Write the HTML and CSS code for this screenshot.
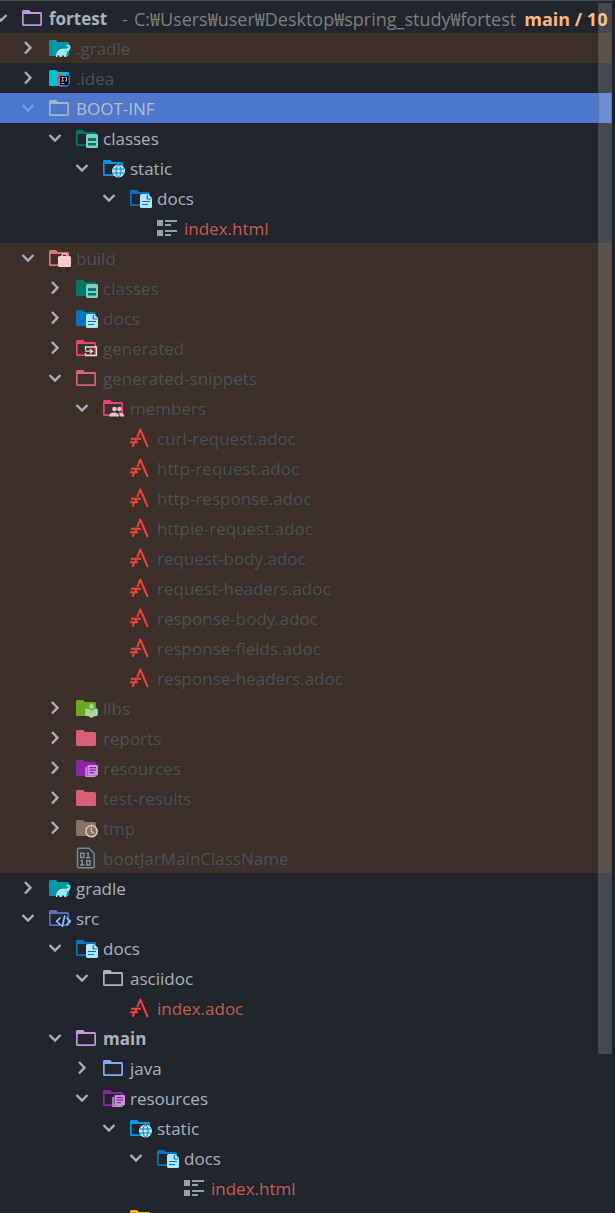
FILE: index.html
```
<!DOCTYPE html>
<html lang="en">
<head>
  <meta charset="UTF-8" />
  <meta name="viewport" content="width=device-width, initial-scale=1.0" />
  <title>fortest - Project</title>
  <link rel="stylesheet" href="styles.css">
</head>
<body>

  <svg class="sprite" aria-hidden="true">
    <symbol id="down" viewBox="0 0 16 16"><path d="M2.5 5 8 10.500 13.500 5" fill="none" stroke="currentColor" stroke-width="2.400"/></symbol>
    <symbol id="right" viewBox="0 0 16 16"><path d="M5 2 10.500 7.700 5 13.500" fill="none" stroke="currentColor" stroke-width="2.400"/></symbol>

    <symbol id="folder" viewBox="0 0 24 20"><path d="M2.500 2H8l2 2h9.500Q21 4 21 5.500v11Q21 18 19.500 18h-17Q1 18 1 16.500v-13Q1 2 2.500 2z" fill="currentColor"/></symbol>
    <symbol id="open" viewBox="0 0 24 20"><path fill-rule="evenodd" d="M2.500 2H8l2 2h9.500Q21 4 21 5.500v11Q21 18 19.500 18h-17Q1 18 1 16.500v-13Q1 2 2.500 2zM2.700 6v10.300h16.600V6z" fill="currentColor"/></symbol>

    <symbol id="b-gradle" viewBox="0 0 24 20"><path d="M8 19c0-4 1.500-7 5-8 2-.6 4 .2 5.500-.3 1.500-.5 2.500-1.500 2.200-2.300-.3-.8-1.500-.4-1.700.3l-.9-.6c.6-1.600 3.400-1.800 4.200 0 .9 2.400-.7 4.500-2.800 5.700-.8.500-1 2.200-1 5.200h-2.300c-.1-1.500-.5-2-1.200-2s-1.100.6-1.200 2h-2.200c-.1-1.500-.4-2-1.100-2s-1.100.6-1.200 2z" fill="#a8e8ee"/><circle cx="17.500" cy="13" r=".6" fill="#0097a7"/></symbol>
    <symbol id="b-idea" viewBox="0 0 24 20"><path d="M10 7.500 14 6l4 4-4 8-4-2z" fill="#fc315c"/><path d="M17 7l4-1 1 3v7l-4 3-5-1z" fill="#1878f2"/><path d="M10.500 15l4 1v3l-4-1z" fill="#b14fd0"/><path d="M12 8h8.500v9H12z" fill="#000"/><path d="M13.500 9.500h2.500M14.700 9.500v3.500M13.500 13h2.500M17 9.500h1.500v3.500h-1.500M13.500 15.500h3" stroke="#ccc" stroke-width=".9" fill="none"/></symbol>
    <symbol id="b-classes" viewBox="0 0 24 20"><rect x="11" y="6" width="12" height="14" rx="1.500" fill="#80cbc4"/><path d="M13 10h8v3h-8zM13 15h8v2.500h-8z" fill="#00796b"/></symbol>
    <symbol id="b-globe" viewBox="0 0 24 20"><circle cx="16.500" cy="13" r="6.500" fill="#b3e5fc"/><g fill="none" stroke="#0277bd" stroke-width=".9"><ellipse cx="16.500" cy="13" rx="2.500" ry="5.800"/><path d="M11 11h11M11 15h11"/></g></symbol>
    <symbol id="b-docs" viewBox="0 0 24 20"><path d="M12.500 6H19l4 4v8.500q0 1.500-1.500 1.500h-9Q11 20 11 18.500v-11Q11 6 12.500 6z" fill="#b3e5fc"/><path d="M18.300 7v4h4M13 13.500h8M13 16.500h6" stroke="#0277bd" stroke-width="1.200" fill="none"/></symbol>
    <symbol id="b-build" viewBox="0 0 24 20"><path d="M14 9V7.500q0-1.300 1.300-1.300h2.400q1.300 0 1.300 1.300V9" fill="none" stroke="#ffcdd2" stroke-width="1.300"/><rect x="10" y="8" width="13" height="11" rx="1.500" fill="#ffcdd2"/></symbol>
    <symbol id="b-generated" viewBox="0 0 24 20"><path d="M10.500 12V9h11v8.500h-11V15M10 13.200h7M15 11l2.500 2.200L15 15.500" fill="none" stroke="#f8d4dc" stroke-width="1.300"/></symbol>
    <symbol id="b-members" viewBox="0 0 24 20"><g fill="#f8bbd0"><circle cx="12.500" cy="11" r="2.300"/><circle cx="17.500" cy="11" r="2.300"/><path d="M7 18.500c0-2.500 2-4 5-4s5 1.500 5 4zM16.300 14.500c4-.4 6 1.500 6 4h-4c0-1.500-.6-3-2-4z"/></g></symbol>
    <symbol id="b-libs" viewBox="0 0 24 20"><circle cx="16.500" cy="8.500" r="2.400" fill="#a5d6a7"/><path d="M11 10.500q3.500.5 5.500 2.300 2-1.800 5.500-2.300.8 0 .8.800v6.200q-4 .3-6.300 2.500-2.300-2.200-6.300-2.500v-6.200q0-.8.800-.8z" fill="#a5d6a7"/></symbol>
    <symbol id="b-resources" viewBox="0 0 24 20"><rect x="12.500" y="7" width="10.500" height="10.500" rx="1.200" fill="#ce93d8"/><path d="M11 9v9.300h9.500" fill="none" stroke="#ce93d8" stroke-width="1.500"/><path d="M14.500 9.700h6.500M14.500 12.200h6.500M14.500 14.700h4.500" stroke="#8e24aa" stroke-width="1.200"/></symbol>
    <symbol id="b-tmp" viewBox="0 0 24 20"><circle cx="16.500" cy="13.200" r="5.600" fill="#8d6e63" stroke="#d7ccc8" stroke-width="1.500"/><path d="M16.300 9.500v4l2.700 2" fill="none" stroke="#d7ccc8" stroke-width="1.200"/></symbol>
    <symbol id="b-src" viewBox="0 0 24 20"><path d="M12.500 9.500 8.700 13.200 12.500 17M18.500 9.500 22.300 13.200 18.500 17M16.800 7.500l-2.600 11.500" fill="none" stroke="#81d4fa" stroke-width="1.600"/></symbol>

    <symbol id="adoc" viewBox="0 0 24 20"><path d="M8.300 9 11.300 1.500 18.700 19M2 10.800h10M1 14.200h8M7.500 10.500 6.500 14M5.200 14.200 3.700 18.800" fill="none" stroke="#f44336" stroke-width="2" stroke-linejoin="round"/></symbol>
    <symbol id="html" viewBox="0 0 24 20"><path d="M1 2h6v6H1zM1 12h6v6H1zM9 2h12v2H9zM9 6h6v2H9zM9 12h12v2H9zM9 16h6v2H9z" fill="#90a4ae"/></symbol>
    <symbol id="binary" viewBox="0 0 24 22"><path d="M3.500 1.200H14l5.200 5.300v13.300q0 1-1 1H3.500q-1 0-1-1V2.200q0-1 1-1z" fill="none" stroke="#6c8d9c" stroke-width="1.500"/><path d="M5.700 6.200h3.200v4.300H5.700zM11.500 6.200h1.700v4.800M11 10.800h4.500M5.500 13.500h1.700v4.600M5 18h4.500M11.800 13.700h3.200v4.300h-3.200z" fill="none" stroke="#7895a1" stroke-width="1.400"/></symbol>
  </svg>

  <main class="project">
    <ul class="tree">
      <li class="row level-0 root"><button class="toggle" aria-label="Collapse"><svg><use href="#down"/></svg></button><svg class="icon violet"><use href="#open"/></svg><span>fortest</span><span class="dash">-</span><span class="path">C:₩Users₩user₩Desktop₩spring_study₩fortest</span><span class="branch">main / 10</span></li>
      <li class="row level-1 excluded"><button class="toggle" aria-label="Expand"><svg><use href="#right"/></svg></button><svg class="icon cyan"><use href="#folder"/><use href="#b-gradle"/></svg><span>.gradle</span></li>
      <li class="row level-1 ignored"><button class="toggle" aria-label="Expand"><svg><use href="#right"/></svg></button><svg class="icon aqua"><use href="#folder"/><use href="#b-idea"/></svg><span>.idea</span></li>
      <li class="row level-1 selected"><button class="toggle" aria-label="Collapse"><svg><use href="#down"/></svg></button><svg class="icon grey"><use href="#open"/></svg><span>BOOT-INF</span></li>
      <li class="row level-2"><button class="toggle" aria-label="Collapse"><svg><use href="#down"/></svg></button><svg class="icon teal"><use href="#open"/><use href="#b-classes"/></svg><span>classes</span></li>
      <li class="row level-3"><button class="toggle" aria-label="Collapse"><svg><use href="#down"/></svg></button><svg class="icon sky"><use href="#open"/><use href="#b-globe"/></svg><span>static</span></li>
      <li class="row level-4"><button class="toggle" aria-label="Collapse"><svg><use href="#down"/></svg></button><svg class="icon blue"><use href="#open"/><use href="#b-docs"/></svg><span>docs</span></li>
      <li class="row level-5 file unversioned"><svg class="icon"><use href="#html"/></svg><span>index.html</span></li>

      <li class="row level-1 excluded"><button class="toggle" aria-label="Collapse"><svg><use href="#down"/></svg></button><svg class="icon coral"><use href="#open"/><use href="#b-build"/></svg><span>build</span></li>
      <li class="row level-2 excluded"><button class="toggle" aria-label="Expand"><svg><use href="#right"/></svg></button><svg class="icon teal"><use href="#folder"/><use href="#b-classes"/></svg><span>classes</span></li>
      <li class="row level-2 excluded"><button class="toggle" aria-label="Expand"><svg><use href="#right"/></svg></button><svg class="icon blue"><use href="#folder"/><use href="#b-docs"/></svg><span>docs</span></li>
      <li class="row level-2 excluded"><button class="toggle" aria-label="Expand"><svg><use href="#right"/></svg></button><svg class="icon pink"><use href="#open"/><use href="#b-generated"/></svg><span>generated</span></li>
      <li class="row level-2 excluded"><button class="toggle" aria-label="Collapse"><svg><use href="#down"/></svg></button><svg class="icon rose"><use href="#open"/></svg><span>generated-snippets</span></li>
      <li class="row level-3 excluded"><button class="toggle" aria-label="Collapse"><svg><use href="#down"/></svg></button><svg class="icon pink"><use href="#open"/><use href="#b-members"/></svg><span>members</span></li>
      <li class="row level-4 file excluded"><svg class="icon"><use href="#adoc"/></svg><span>curl-request.adoc</span></li>
      <li class="row level-4 file excluded"><svg class="icon"><use href="#adoc"/></svg><span>http-request.adoc</span></li>
      <li class="row level-4 file excluded"><svg class="icon"><use href="#adoc"/></svg><span>http-response.adoc</span></li>
      <li class="row level-4 file excluded"><svg class="icon"><use href="#adoc"/></svg><span>httpie-request.adoc</span></li>
      <li class="row level-4 file excluded"><svg class="icon"><use href="#adoc"/></svg><span>request-body.adoc</span></li>
      <li class="row level-4 file excluded"><svg class="icon"><use href="#adoc"/></svg><span>request-headers.adoc</span></li>
      <li class="row level-4 file excluded"><svg class="icon"><use href="#adoc"/></svg><span>response-body.adoc</span></li>
      <li class="row level-4 file excluded"><svg class="icon"><use href="#adoc"/></svg><span>response-fields.adoc</span></li>
      <li class="row level-4 file excluded"><svg class="icon"><use href="#adoc"/></svg><span>response-headers.adoc</span></li>
      <li class="row level-2 excluded"><button class="toggle" aria-label="Expand"><svg><use href="#right"/></svg></button><svg class="icon green"><use href="#folder"/><use href="#b-libs"/></svg><span>libs</span></li>
      <li class="row level-2 excluded"><button class="toggle" aria-label="Expand"><svg><use href="#right"/></svg></button><svg class="icon rose"><use href="#folder"/></svg><span>reports</span></li>
      <li class="row level-2 excluded"><button class="toggle" aria-label="Expand"><svg><use href="#right"/></svg></button><svg class="icon purple"><use href="#folder"/><use href="#b-resources"/></svg><span>resources</span></li>
      <li class="row level-2 excluded"><button class="toggle" aria-label="Expand"><svg><use href="#right"/></svg></button><svg class="icon rose"><use href="#folder"/></svg><span>test-results</span></li>
      <li class="row level-2 excluded"><button class="toggle" aria-label="Expand"><svg><use href="#right"/></svg></button><svg class="icon brown"><use href="#folder"/><use href="#b-tmp"/></svg><span>tmp</span></li>
      <li class="row level-2 file excluded"><svg class="icon tall"><use href="#binary"/></svg><span>bootJarMainClassName</span></li>

      <li class="row level-1"><button class="toggle" aria-label="Expand"><svg><use href="#right"/></svg></button><svg class="icon cyan"><use href="#folder"/><use href="#b-gradle"/></svg><span>gradle</span></li>
      <li class="row level-1"><button class="toggle" aria-label="Collapse"><svg><use href="#down"/></svg></button><svg class="icon indigo"><use href="#open"/><use href="#b-src"/></svg><span>src</span></li>
      <li class="row level-2"><button class="toggle" aria-label="Collapse"><svg><use href="#down"/></svg></button><svg class="icon blue"><use href="#open"/><use href="#b-docs"/></svg><span>docs</span></li>
      <li class="row level-3"><button class="toggle" aria-label="Collapse"><svg><use href="#down"/></svg></button><svg class="icon grey"><use href="#open"/></svg><span>asciidoc</span></li>
      <li class="row level-4 file unversioned"><svg class="icon"><use href="#adoc"/></svg><span>index.adoc</span></li>
      <li class="row level-2 module"><button class="toggle" aria-label="Collapse"><svg><use href="#down"/></svg></button><svg class="icon violet"><use href="#open"/></svg><span>main</span></li>
      <li class="row level-3"><button class="toggle" aria-label="Expand"><svg><use href="#right"/></svg></button><svg class="icon source"><use href="#open"/></svg><span>java</span></li>
      <li class="row level-3"><button class="toggle" aria-label="Collapse"><svg><use href="#down"/></svg></button><svg class="icon purple"><use href="#open"/><use href="#b-resources"/></svg><span>resources</span></li>
      <li class="row level-4"><button class="toggle" aria-label="Collapse"><svg><use href="#down"/></svg></button><svg class="icon sky"><use href="#open"/><use href="#b-globe"/></svg><span>static</span></li>
      <li class="row level-5"><button class="toggle" aria-label="Collapse"><svg><use href="#down"/></svg></button><svg class="icon blue"><use href="#open"/><use href="#b-docs"/></svg><span>docs</span></li>
      <li class="row level-6 file unversioned"><svg class="icon"><use href="#html"/></svg><span>index.html</span></li>
      <li class="row level-4 file"><svg class="icon amber"><use href="#folder"/></svg><span>templates</span></li>
    </ul>
    <div class="scrollbar"></div>
  </main>

</body>
</html>
```
FILE: styles.css
```
* {
  box-sizing: border-box;
}

body {
  margin: 0;
  height: 100vh;
  overflow: hidden;
  background: #22252d;
  color: #a9b1be;
  font-family: "Open Sans", "Noto Sans CJK KR", sans-serif;
  font-size: 17px;
}

.sprite {
  display: none;
}

.project {
  position: relative;
  height: 100vh;
  overflow: hidden;
  padding-top: 2px;
  border-top: 1px solid #454b5b;
  border-right: 3px solid #1d2129;
}

.tree {
  list-style: none;
  margin: 0 0 0 -7px;
  padding: 0;
}

.row {
  display: flex;
  align-items: center;
  height: 30px;
  line-height: 30px;
  white-space: nowrap;
}

.row span {
  padding-top: 2px;
}

.level-1 { padding-left: 27px; }
.level-2 { padding-left: 54px; }
.level-3 { padding-left: 81px; }
.level-4 { padding-left: 108px; }
.level-5 { padding-left: 135px; }
.level-6 { padding-left: 162px; }

.toggle {
  display: flex;
  width: 16px;
  height: 16px;
  margin-right: 12px;
  padding: 0;
  border: none;
  background: none;
  color: #a9adbd;
  cursor: pointer;
}

.toggle svg {
  width: 16px;
  height: 16px;
}

.icon {
  flex: none;
  width: 24px;
  height: 20px;
  margin-right: 4px;
}

.icon.tall {
  height: 22px;
}

/* files have no toggle */
.file .icon {
  margin-left: 28px;
}

.root,
.module {
  font-weight: bold;
}

.dash,
.path {
  color: #7d7f80;
  font-size: 18px;
  font-weight: normal;
}

.dash {
  margin-left: 15px;
}

.path {
  margin-left: 6px;
}

.branch {
  margin-left: 8px;
  color: #ffb680;
  font-size: 18px;
}

.ignored {
  color: #4b525b;
}

.excluded {
  background: #3c3028;
  color: #4b525b;
}

.selected {
  background: #4d78cc;
  color: #b9c0c6;
}

.selected .toggle {
  color: #6a9bf7;
}

.unversioned {
  color: #c75d50;
}

.violet { color: #c792ea; }
.cyan { color: #0097a7; }
.aqua { color: #00bcd4; }
.grey { color: #abb2bf; }
.teal { color: #00796b; }
.sky { color: #039be5; }
.blue { color: #0277bd; }
.coral { color: #e57373; }
.pink { color: #ec407a; }
.rose { color: #d95f74; }
.green { color: #6aaa20; }
.purple { color: #8e24aa; }
.brown { color: #8d6e63; }
.indigo { color: #5c6bc0; }
.source { color: #82aaff; }
.amber { color: #ffb300; }

/* scrollbar thumb floats over the rows */
.scrollbar {
  position: absolute;
  top: 2px;
  right: 0;
  width: 14px;
  height: calc(100% - 161px);
  border: 1px solid rgba(60, 60, 60, 0.3);
  background: rgba(255, 255, 255, 0.17);
}
```
